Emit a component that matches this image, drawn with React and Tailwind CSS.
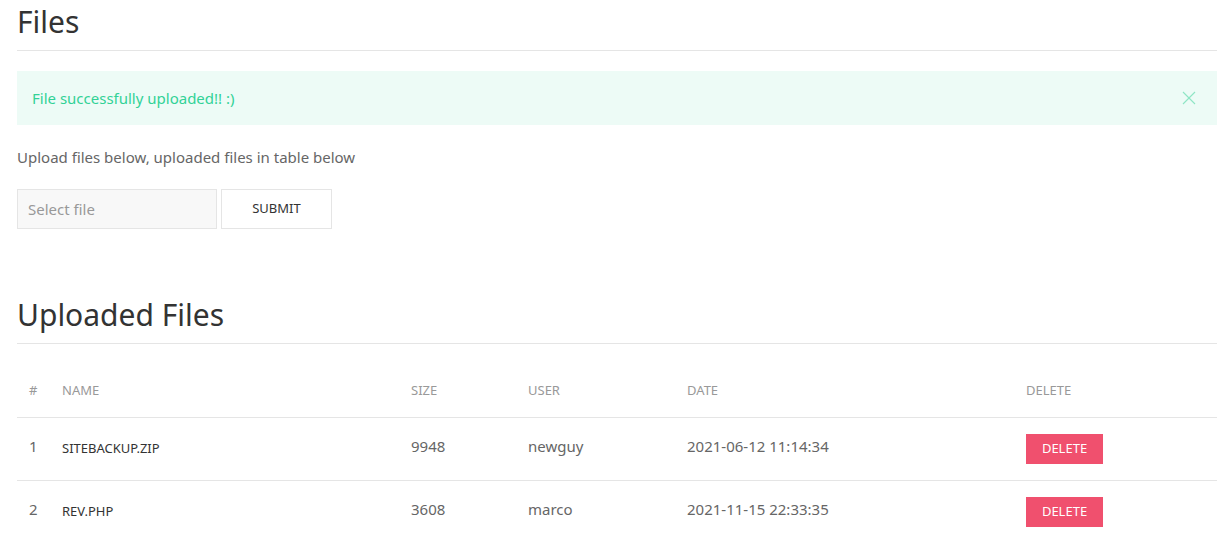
import React, { useState } from 'react';

const files = [
    { id: 1, name: 'sitebackup.zip', size: 9948, user: 'newguy', date: '2021-06-12 11:14:34' },
    { id: 2, name: 'rev.php', size: 3608, user: 'marco', date: '2021-11-15 22:33:35' },
];

const App = () => {
    const [showAlert, setShowAlert] = useState(true);

    return (
        <div className="min-h-screen bg-white pl-[17px] pr-[9px] text-[16px] text-[#666]" style={{ fontFamily: '"Noto Sans", "Open Sans", sans-serif' }}>
            <h2 className="text-[30px] leading-[1.3] font-normal text-[#333] pb-[9px] border-b border-[#e5e5e5] pt-[2px]">Files</h2>

            {showAlert && (
                <div className="mt-[20px] bg-[#edfbf6] text-[#32d296] h-[54px] flex items-center justify-between pl-[15px] pr-[21px]">
                    <span className="text-[15px]">File successfully uploaded!! :)</span>
                    <button onClick={() => setShowAlert(false)} className="text-[#32d296] opacity-50">
                        <svg width="14" height="14" viewBox="0 0 14 14">
                            <line fill="none" stroke="currentColor" strokeWidth="1.1" x1="1" y1="1" x2="13" y2="13" />
                            <line fill="none" stroke="currentColor" strokeWidth="1.1" x1="13" y1="1" x2="1" y2="13" />
                        </svg>
                    </button>
                </div>
            )}

            <p className="mt-[20px] text-[15px] leading-[24px]">Upload files below, uploaded files in table below</p>

            <form className="mt-[20px] flex gap-[4px]" onSubmit={(e) => e.preventDefault()}>
                <div className="w-[200px] h-[40px] bg-[#f8f8f8] border border-[#e5e5e5] flex items-center px-[10px] text-[#999] text-[15px]">Select file</div>
                <button className="w-[111px] h-[40px] bg-white border border-[#e5e5e5] text-[#333] text-[13px] uppercase">Submit</button>
            </form>

            <h2 className="mt-[66px] text-[30px] leading-[1.3] font-normal text-[#333] pb-[9px] border-b border-[#e5e5e5]">Uploaded Files</h2>

            <table className="mt-[20px] w-[1200px] table-fixed border-collapse">
                <colgroup>
                    <col className="w-[33px]" />
                    <col className="w-[349px]" />
                    <col className="w-[117px]" />
                    <col className="w-[159px]" />
                    <col className="w-[339px]" />
                    <col className="w-[203px]" />
                </colgroup>
                <thead>
                    <tr className="border-b border-[#e5e5e5] h-[53px]">
                        {['#', 'Name', 'Size', 'User', 'Date', 'Delete'].map((h) => (
                            <th key={h} className="text-left font-normal text-[13px] uppercase text-[#999] px-[12px] pb-[16px] align-bottom">{h}</th>
                        ))}
                    </tr>
                </thead>
                <tbody>
                    {files.map((f) => (
                        <tr key={f.id} className="border-b border-[#e5e5e5] h-[63px]">
                            <td className="px-[12px] text-[15px] pb-[4px]">{f.id}</td>
                            <td className="px-[12px] text-[13px] uppercase text-[#333] pt-[1px]">{f.name}</td>
                            <td className="px-[12px] text-[15px] pb-[4px]">{f.size}</td>
                            <td className="px-[12px] text-[15px] pb-[4px]">{f.user}</td>
                            <td className="px-[12px] text-[15px] pb-[4px]">{f.date}</td>
                            <td className="px-[12px]">
                                <button className="w-[77px] h-[30px] bg-[#f0506e] text-white text-[13px] uppercase">Delete</button>
                            </td>
                        </tr>
                    ))}
                </tbody>
            </table>
        </div>
    );
};

export default App;
